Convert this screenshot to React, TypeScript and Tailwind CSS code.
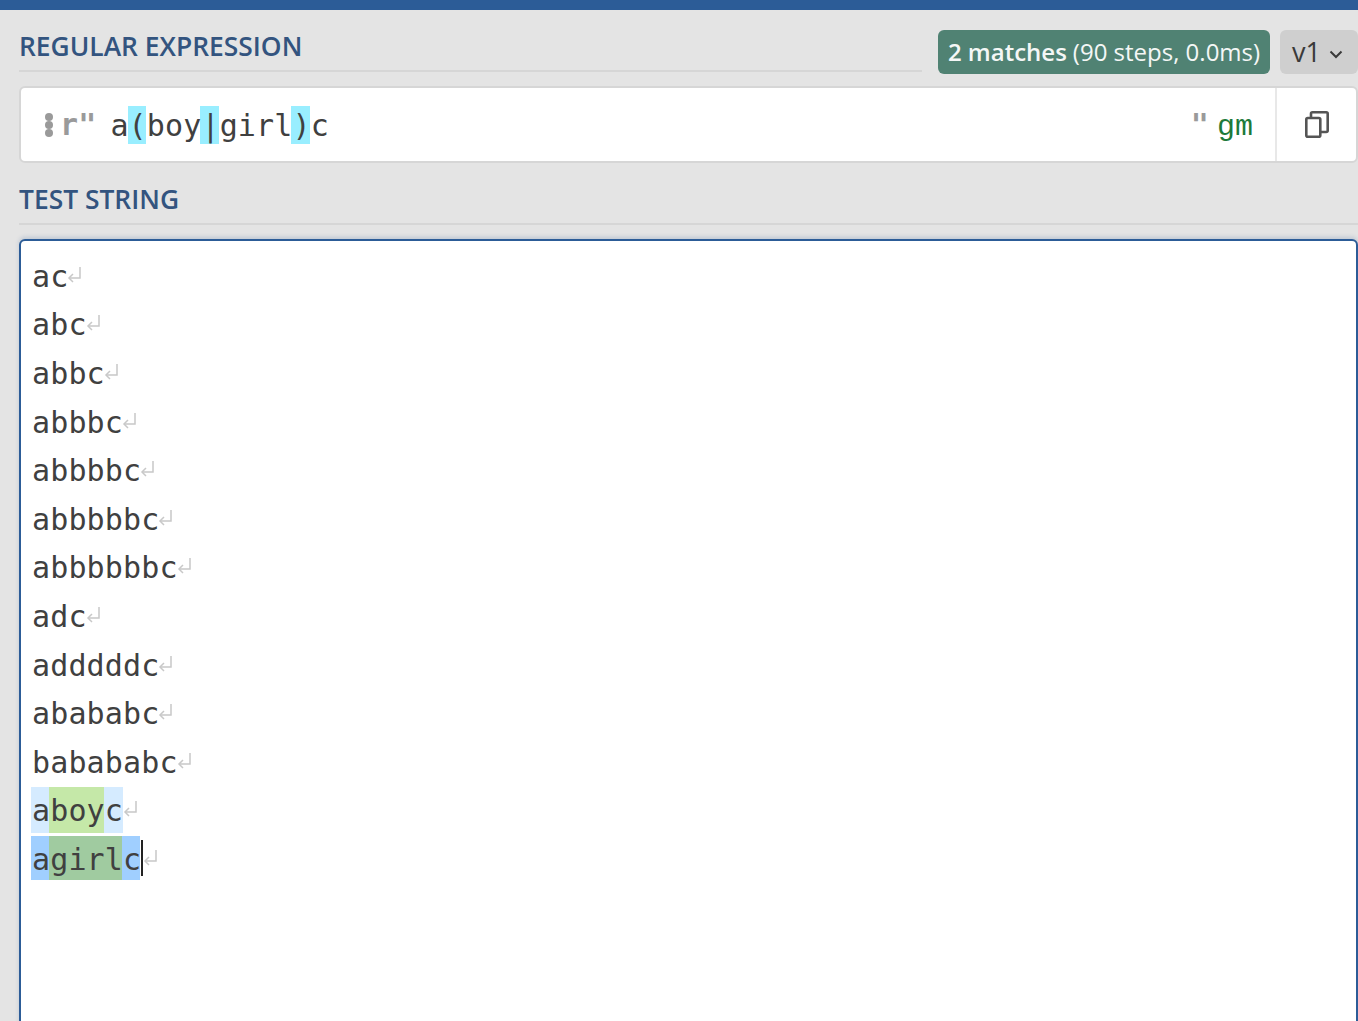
const mono = "font-['DejaVu_Sans_Mono',monospace] tracking-[0.14px]";

const lines = ["ac", "abc", "abbc", "abbbc", "abbbbc", "abbbbbc", "abbbbbbc", "adc", "adddddc", "abababc", "babababc"];

function ReturnMark() {
  return (
    <svg width="16" height="20" viewBox="0 0 16 20" fill="none" stroke="#c8c8c8" strokeWidth="1.5" className="ml-[-1px] mb-[1px]">
      <path d="M14 2v11H3" />
      <path d="M7 9l-4 4 4 4" />
    </svg>
  );
}

function Line({ children }: { children: React.ReactNode }) {
  return (
    <div className="flex h-[48.6px] items-center">
      {children}
      <ReturnMark />
    </div>
  );
}

// text sits a little below the centre of its highlight box
function Seg({ children, className = "" }: { children: React.ReactNode; className?: string }) {
  return (
    <span className={`flex items-center ${className}`}>
      <span className="translate-x-[1px] translate-y-[1px]">{children}</span>
    </span>
  );
}

export default function App() {
  return (
    <div className="h-[1021px] overflow-hidden bg-[#e4e4e4]">
      <div className="h-[10px] bg-[#2c5c97]" />

      {/* Regex header */}
      <div className="flex h-[64px] items-start pl-[19px] pt-[20px]">
        <div className="mr-[16px] w-[903px]">
          <div className="h-[42px] border-b-2 border-[#d6d6d6] font-['Open_Sans',sans-serif] text-[26.4px] leading-[32px] font-semibold text-[#33547f]">
            REGULAR EXPRESSION
          </div>
        </div>
        <div className="flex h-[44px] w-[332px] items-center justify-center whitespace-nowrap rounded-md bg-[#508273] font-['Open_Sans',sans-serif] text-[24px] text-[#f4f7f6]">
          <span className="font-semibold">2 matches</span>
          <span className="ml-[6px]">(90 steps, 0.0ms)</span>
        </div>
        <div className="ml-[10px] flex h-[44px] flex-1 items-center rounded-md bg-[#cfcfcf] pl-[12px] font-['Open_Sans',sans-serif] text-[27px] text-[#3a3a3a]">
          v1
          <svg width="14" height="9" viewBox="0 0 14 9" fill="none" stroke="#3a3a3a" strokeWidth="2" className="ml-[8px] mt-[4px]">
            <path d="M1.500 1.500L7 7l5.500-5.500" />
          </svg>
        </div>
      </div>

      {/* Regex input */}
      <div className="ml-[19px] mt-[12px] flex h-[77px] items-stretch rounded-md border-2 border-[#d6d6d6] bg-white">
        <div className="flex flex-1 items-center pl-[24px]">
          <div className="flex flex-col">
            <span className="h-[8px] w-[8px] rounded-full bg-[#9a9a9a]" />
            <span className="h-[8px] w-[8px] rounded-full bg-[#9a9a9a]" />
            <span className="h-[8px] w-[8px] rounded-full bg-[#9a9a9a]" />
          </div>
          <span className={`${mono} ml-[7px] text-[30px] font-bold text-[#9a9a9a]`}>r"</span>
          <div className={`${mono} ml-[13px] flex text-[30px] text-[#404040]`}>
            <Seg className="h-[38px]">a</Seg>
            <Seg className="h-[38px] bg-[#99eeff]">(</Seg>
            <Seg className="h-[38px]">boy</Seg>
            <Seg className="h-[38px] bg-[#99eeff]">|</Seg>
            <Seg className="h-[38px]">girl</Seg>
            <Seg className="h-[38px] bg-[#99eeff]">)</Seg>
            <Seg className="h-[38px]">c</Seg>
          </div>
          <span className={`${mono} ml-auto text-[30px] font-bold text-[#9a9a9a]`}>"</span>
          <span className="ml-[8px] mr-[22px] translate-y-[3px] font-['Liberation_Mono',monospace] text-[30px] text-[#1d7a3a]">gm</span>
        </div>
        <div className="flex w-[81px] items-center justify-center border-l-2 border-[#e8e8e8]">
          <svg width="24" height="27" viewBox="0 0 24 27" fill="none" stroke="#555555" strokeWidth="2.600">
            <rect x="1.300" y="7" width="14" height="18.700" rx="1.500" />
            <path d="M6 6.500V2.800A1.500 1.500 0 0 1 7.500 1.300h13.700a1.500 1.500 0 0 1 1.500 1.500V19.500a1.500 1.500 0 0 1-1.500 1.500H16" />
          </svg>
        </div>
      </div>

      {/* Test string */}
      <div className="ml-[19px] mt-[19px] h-[43px] border-b-2 border-[#d6d6d6] font-['Open_Sans',sans-serif] text-[26.4px] leading-[34px] font-semibold text-[#33547f]">
        TEST STRING
      </div>
      <div className="ml-[19px] mt-[14px] h-[800px] rounded-t-md border-2 border-[#2c5c97] bg-white pl-[10px] pt-[10px] shadow-[0_-2px_4px_rgba(44,92,151,0.2)]">
        <div className={`${mono} text-[30px] text-[#404040]`}>
          {lines.map((l) => (
            <Line key={l}>
              <Seg>{l}</Seg>
            </Line>
          ))}
          <Line>
            <Seg className="h-[46px] bg-[#d5ebff]">a</Seg>
            <Seg className="h-[46px] bg-[#c5e8a8]">boy</Seg>
            <Seg className="h-[46px] w-[19.5px] bg-[#d5ebff]">c</Seg>
          </Line>
          <Line>
            <Seg className="h-[44px] bg-[#a0cfff]">a</Seg>
            <Seg className="h-[44px] bg-[#a0cba0]">girl</Seg>
            <Seg className="h-[44px] bg-[#a0cfff]">c</Seg>
            <span className="ml-[1px] h-[36px] w-[2px] bg-[#222222]" />
          </Line>
        </div>
      </div>
    </div>
  );
}
